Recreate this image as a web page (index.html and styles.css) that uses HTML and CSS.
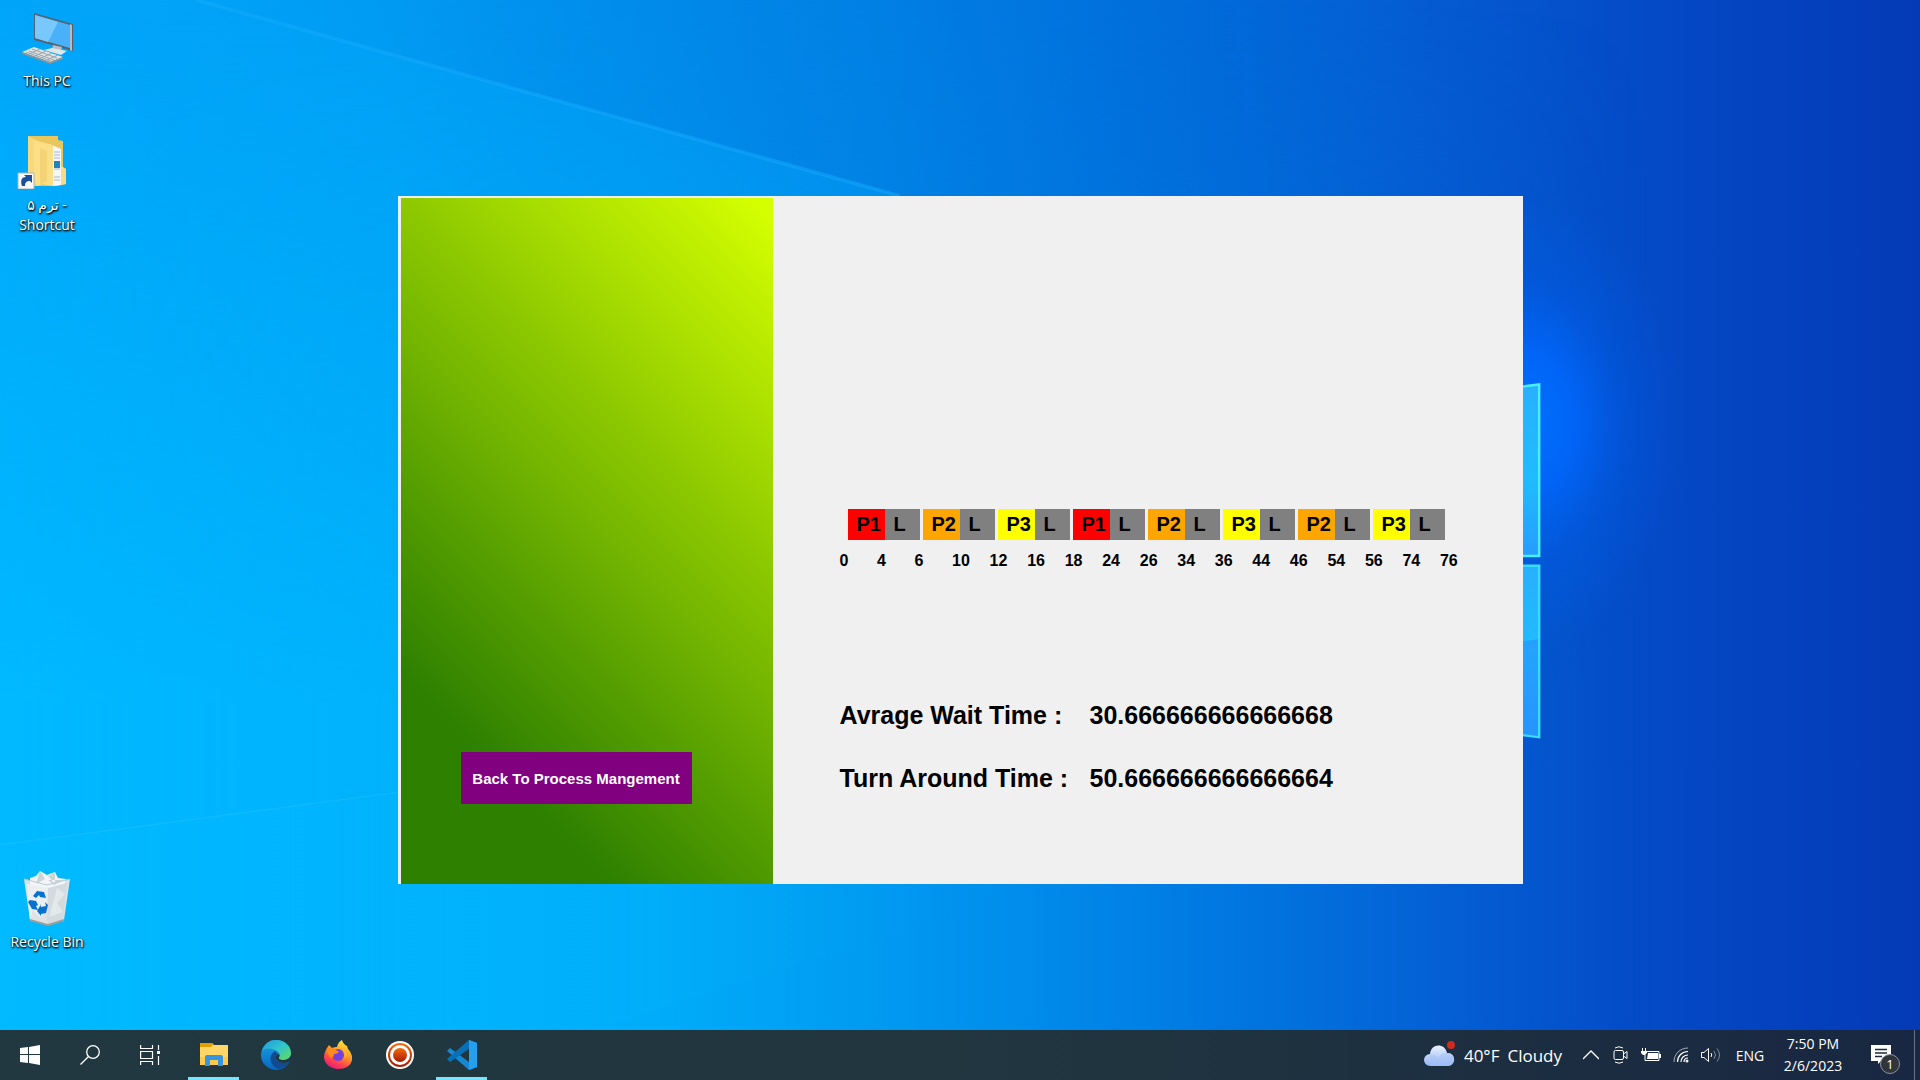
FILE: index.html
```html
<!DOCTYPE html>
<html lang="en">
<head>
<meta charset="utf-8">
<title>Process scheduling</title>
<link rel="stylesheet" href="styles.css">
</head>
<body>
<div class="screen">
  <svg class="wallpaper" viewBox="0 0 1568 882" preserveAspectRatio="none" aria-hidden="true">
    <defs>
      <linearGradient id="sky" x1="0" y1="0" x2="1" y2="0">
        <stop offset="0" stop-color="#00a6fa"/><stop offset=".2" stop-color="#00a0f6"/>
        <stop offset=".45" stop-color="#008cec"/><stop offset=".6" stop-color="#0074e0"/>
        <stop offset=".75" stop-color="#055ad2"/><stop offset=".88" stop-color="#0447c4"/>
        <stop offset="1" stop-color="#043ab6"/>
      </linearGradient>
      <linearGradient id="low" gradientUnits="userSpaceOnUse" x1="0" y1="0" x2="1350" y2="0">
        <stop offset="0" stop-color="#00b9ff"/><stop offset=".4" stop-color="#00b2fc" stop-opacity=".8"/><stop offset="1" stop-color="#0070dc" stop-opacity="0"/>
      </linearGradient>
      <linearGradient id="fade" x1="0" y1="0" x2="0" y2="1">
        <stop offset="0" stop-color="#000"/><stop offset=".65" stop-color="#fff"/>
      </linearGradient>
      <mask id="m"><rect width="1568" height="882" fill="url(#fade)"/></mask>
      <radialGradient id="glow" gradientUnits="userSpaceOnUse" cx="1245" cy="345" r="190" gradientTransform="translate(1245 345) scale(.7 1) translate(-1245 -345)">
        <stop offset="0" stop-color="#0070ff"/><stop offset=".3" stop-color="#0068ff" stop-opacity=".85"/><stop offset=".6" stop-color="#0062f4" stop-opacity=".3"/><stop offset="1" stop-color="#0060f0" stop-opacity="0"/>
      </radialGradient>
      <linearGradient id="top" gradientUnits="userSpaceOnUse" x1="160" y1="0" x2="1300" y2="0">
        <stop offset="0" stop-color="#007ae0" stop-opacity="0"/><stop offset=".45" stop-color="#0074dc" stop-opacity=".45"/><stop offset=".7" stop-color="#0060d0" stop-opacity=".3"/><stop offset="1" stop-color="#0058cc" stop-opacity="0"/>
      </linearGradient>
      <linearGradient id="floor" gradientUnits="userSpaceOnUse" x1="0" y1="0" x2="800" y2="0">
        <stop offset="0" stop-color="#00bcff" stop-opacity=".25"/><stop offset="1" stop-color="#00bcff" stop-opacity="0"/>
      </linearGradient>
      <linearGradient id="pane" x1="0" y1="0" x2="0" y2="1">
        <stop offset="0" stop-color="#28b0ff"/><stop offset=".55" stop-color="#20bcff"/><stop offset="1" stop-color="#269cff"/>
      </linearGradient>
    </defs>
    <rect width="1568" height="882" fill="url(#sky)"/>
    <rect width="1568" height="882" fill="url(#low)" mask="url(#m)"/>
    <path d="M160 0 735 160 1245 315 1350 0z" fill="url(#top)"/>
    <path d="M160 0 735 160" stroke="#18adff" stroke-width="3" opacity=".45"/>
    <path d="M0 690 325 647" stroke="#30c4ff" stroke-width="1" opacity=".4"/>
    <path d="M0 690 325 647V721H860L480 842H0z" fill="url(#floor)"/>
    <rect x="1080" y="150" width="350" height="390" fill="url(#glow)"/>
    <path d="M1200 321 1257 314V454H1200z" fill="url(#pane)" stroke="#48f0ff" stroke-width="2"/>
    <path d="M1200 462H1257V602L1200 595z" fill="url(#pane)" stroke="#38dcff" stroke-width="2"/>
    <path d="M1200 530 1256 522V601L1200 594z" fill="#2890ff" opacity=".6"/>
  </svg>

  <nav class="shortcuts" aria-label="Desktop">
    <a class="shortcut" href="#pc">
      <svg width="54" height="54" viewBox="0 0 54 54" aria-hidden="true">
        <path d="M14 2 53 13V40L14 29z" fill="#54636d"/><path d="M15 4 50 14V37L15 27z" fill="#49b1fa"/><path d="M15 4 38 11 28 31 15 27z" fill="#79c8fc"/><path d="M50 13l2 1v26l-2-1z" fill="#b3bdc4"/>
        <path d="M33 34l9 2-1 5-9-2z" fill="#b8bfc3"/><path d="M24 39l8-2 15 3-6 4z" fill="#e2e6e8"/>
        <path d="M2 41 14 36 43 46 30 51z" fill="#dfe3e5"/><path d="M2 41v2l28 10v-2zM30 51v2l13-5v-2z" fill="#89949b"/>
        <path d="M6 41l25 9M9 40l25 9M12 38l25 9M9 43l11-5M15 45l11-5M21 47l11-5M27 49l11-5" stroke="#9ba5aa" fill="none"/>
      </svg>
      <span>This PC</span>
    </a>
    <a class="shortcut" href="#term">
      <svg width="62" height="54" viewBox="3 0 62 54" aria-hidden="true">
        <path d="M15 1H45V5L50 6V32L53 34V49L44 51H15z" fill="#e9c65e"/><path d="M39 10 48 14V50L39 51z" fill="#f4f6f7"/><path d="M41 17h6M41 20h6M41 23h6M41 34h6M41 42h6M41 45h6" stroke="#a6b8c4"/><path d="M41 26h6v7h-6z" fill="#2383b9"/>
        <path d="M15 1 25 6V51H15z" fill="#f7d97c"/><path d="M21 5 40 10V51L29 49 25 51 21 44z" fill="#fbdf87"/><path d="M27 13 34 16V47L27 49z" fill="#efcb6b" opacity=".6"/><path d="M48 31l5 3v15l-5 1z" fill="#f7dc85"/>
        <path d="M5 38h16v16H5z" fill="#f8fafc" stroke="#aab4bc"/><path d="M9 51c-2-6 0-9 4-9l-2-2h8v8l-2-2c-4 0-5 2-5 5z" fill="#1b4f9c"/>
      </svg>
      <span>ترم ۵ - Shortcut</span>
    </a>
    <a class="shortcut bin" href="#bin">
      <svg width="50" height="56" viewBox="0 0 50 56" aria-hidden="true">
        <path d="M2 9 25 15 48 9 42 50 26 55 8 50z" fill="#d9e2e8"/><path d="M8 8 14 6 18 1 25 5 33 2 36 8 44 9 41 18H8z" fill="#f3f5f6"/>
        <path d="M18 1l5 8-9 5zM33 3l-7 3 7 8zM41 10l-9 5-6-5z" fill="#cdd4d8"/>
        <path d="M5 14 26 18 25 55 8 50z" fill="#eceff1"/><path d="M26 18 45 13 41 49 25 54z" fill="#d3dbdf"/><path d="M35 18l8 6-8 9 6 9-14 5 4-14z" fill="#e3e8ea"/><path d="M10 40l8 7 7-6v12L9 49z" fill="#dce2e5"/>
        <path d="M2 9 25 15 48 9" fill="none" stroke="#b9cbd6"/><path d="M8 50l18 5 16-5" fill="none" stroke="#a39e9c" stroke-width="2"/>
        <path d="M11 26l4-5 7 1 2 6-6-1-1-2-3 3zM8 30l6 1 2 4-2 1 2 4-6-1-4-7zM18 34l1 3 5-1-1-4 3 3-2 8-5 1v2l-4-5 3-5z" fill="#0873cf"/>
      </svg>
      <span>Recycle Bin</span>
    </a>
  </nav>

  <main class="window">
    <aside class="side">
      <button class="back" type="button">Back To Process Mangement</button>
    </aside>
    <section class="results">
      <ol class="bars">
        <li><span class="job red">P1</span><span class="load">L</span></li>
        <li><span class="job orange">P2</span><span class="load">L</span></li>
        <li><span class="job yellow">P3</span><span class="load">L</span></li>
        <li><span class="job red">P1</span><span class="load">L</span></li>
        <li><span class="job orange">P2</span><span class="load">L</span></li>
        <li><span class="job yellow">P3</span><span class="load">L</span></li>
        <li><span class="job orange">P2</span><span class="load">L</span></li>
        <li><span class="job yellow">P3</span><span class="load">L</span></li>
      </ol>
      <ol class="ticks">
        <li>0</li><li>4</li><li>6</li><li>10</li><li>12</li><li>16</li><li>18</li><li>24</li><li>26</li><li>34</li><li>36</li><li>44</li><li>46</li><li>54</li><li>56</li><li>74</li><li>76</li>
      </ol>
      <dl class="stats">
        <dt>Avrage Wait Time :</dt><dd>30.666666666666668</dd>
        <dt>Turn Around Time :</dt><dd>50.666666666666664</dd>
      </dl>
    </section>
  </main>

  <footer class="taskbar">
    <div class="system">
      <button type="button" aria-label="Start"><svg width="20" height="20" viewBox="0 0 20 20"><path d="M0 3 8 2V9H0zM9 2 20 0V9H9zM0 10H8V18L0 17zM9 10H20V20L9 18z" fill="#fff"/></svg></button>
      <button type="button" aria-label="Search"><svg width="20" height="20" viewBox="0 0 20 20" fill="none" stroke="#fff" stroke-width="1.3"><circle cx="13" cy="7" r="6.3"/><path d="M8.500 11.500 .5 19.500"/></svg></button>
      <button type="button" aria-label="Task view"><svg width="20" height="20" viewBox="0 0 20 20" fill="none" stroke="#fff" stroke-width="1.2"><path d="M.6 0V3.500H12.500V0M.6 20V16.500H12.500V20M.6 6.500H12.500V13.500H.6zM18.500 0V5M18.500 11V20"/><path d="M17 6h3v3h-3z" fill="#fff" stroke="none"/></svg></button>
    </div>
    <div class="apps">
      <button class="open" type="button" aria-label="File Explorer"><svg width="28" height="24" viewBox="0 0 28 24"><path d="M0 0H12L14 2H28V22H0z" fill="#ffd667"/><path d="M0 0H12L13 2 11 4H0z" fill="#e2a000"/><path d="M0 14H28V22H0z" fill="#fcca4d"/><path d="M5 23V14q0-2 2-2H21q2 0 2 2V23H18V17H10V23z" fill="#3795df"/></svg></button>
      <button type="button" aria-label="Edge"><svg width="30" height="30" viewBox="0 0 30 30"><defs><linearGradient id="e1" x1="0" y1="0" x2="1" y2="1"><stop offset="0" stop-color="#1c9de0"/><stop offset=".5" stop-color="#32c4cc"/><stop offset="1" stop-color="#65dc55"/></linearGradient><linearGradient id="e2" x1="0" y1="0" x2="0" y2="1"><stop offset="0" stop-color="#1ba3e6"/><stop offset="1" stop-color="#0768c0"/></linearGradient></defs><circle cx="15" cy="15" r="15" fill="url(#e2)"/><path d="M1 11C4 3 9 0 15 0c9 0 15 6 15 13 0 5-4 7-8 7-3 0-5-1-4-3 2-2 0-6-4-7C9 8 4 8 1 11z" fill="url(#e1)"/><path d="M14 11c-7 4-6 14 3 18 5-1 9-3 11-7-5 2-10 1-12-2-2-2-1-5 1-6z" fill="#124b91"/><path d="M17 14c2 1 2 2 1 3-1 2 1 3 4 3 4 0 7-2 8-5v6l-2 1c-5 2-10 1-12-2-2-2-1-5 1-6z" fill="#213840"/></svg></button>
      <button type="button" aria-label="Firefox"><svg width="28" height="30" viewBox="0 0 28 30"><defs><linearGradient id="f1" x1=".8" y1="0" x2=".3" y2="1"><stop offset="0" stop-color="#fff044"/><stop offset=".45" stop-color="#ff9a22"/><stop offset=".75" stop-color="#ff454c"/><stop offset="1" stop-color="#e8177c"/></linearGradient></defs><path d="M5 5 8 8q2-1 5-1 1-5 5-7 1 4 5 6l1 3q5 5 4 11c-1 6-7 9-14 9S0 24 0 17c0-4 2-8 5-12z" fill="url(#f1)"/><circle cx="14" cy="15" r="6" fill="#7640df"/><path d="M3 10q4-4 9 0l3 2q-2 2-5 2 0 3-3 4-4-4-4-8z" fill="#ff8a20"/><path d="M19 11q3 3 1 8 5-3 2-9z" fill="#ffb52d"/></svg></button>
      <button type="button" aria-label="Recorder"><svg width="28" height="28" viewBox="0 0 28 28"><defs><linearGradient id="r1" x1="0" y1="0" x2="0" y2="1"><stop offset="0" stop-color="#f46a09"/><stop offset="1" stop-color="#a71b05"/></linearGradient></defs><circle cx="14" cy="14" r="14" fill="#fff"/><circle cx="14" cy="14" r="12" fill="url(#r1)"/><circle cx="14" cy="14" r="10" fill="#fff"/><circle cx="14" cy="14" r="7" fill="url(#r1)"/></svg></button>
      <button class="open" type="button" aria-label="Visual Studio Code"><svg width="30" height="30" viewBox="0 0 30 30"><path d="M22 0 30 3V27L22 30 0 11 3 8 22 22z" fill="#1687d2"/><path d="M22 0V9L3 22 0 19z" fill="#0870b7"/><path d="M22 0 30 3V27L22 30z" fill="#25a0ee"/></svg></button>
    </div>
    <div class="tray">
      <button class="weather" type="button">
        <svg width="32" height="28" viewBox="0 0 32 28" aria-hidden="true"><defs><linearGradient id="c1" x1="0" y1="0" x2="0" y2="1"><stop offset="0" stop-color="#eaf1ff"/><stop offset="1" stop-color="#91b5f3"/></linearGradient></defs><path d="M6 25a6 6 0 0 1 0-12C7 2 21 2 23 12c9-1 10 13 0 13z" fill="url(#c1)"/><path d="M6 14c4-1 7 1 8 4 1-4 5-6 9-6 9-1 10 13 0 13H6z" fill="#a4c1f8" opacity=".5"/><circle cx="27" cy="4" r="4" fill="#cc2b20"/></svg>
        <span>40°F</span><span>Cloudy</span>
      </button>
      <button class="tool" type="button" aria-label="Hidden icons"><svg width="16" height="10" viewBox="0 0 16 10" fill="none" stroke="#fff" stroke-width="1.3"><path d="M0 9 8 1 16 9"/></svg></button>
      <button class="tool" type="button" aria-label="Meet now"><svg width="16" height="18" viewBox="0 0 16 18" fill="none" stroke="#fff"><rect x="1" y="4.500" width="9.500" height="9" rx="1.500"/><path d="M10.500 8 14 5.500V12.500L10.500 10M2 2Q6-.5 10 2M2 16Q6 18.500 10 16"/></svg></button>
      <button class="tool" type="button" aria-label="Battery"><svg width="20" height="14" viewBox="0 0 20 14"><path d="M5 3.500H18V12.500H4V7" fill="none" stroke="#fff"/><path d="M7 5h10v6H6zM18 6h2v4h-2zM1 0h1v3H1zM4 0h1v3H4zM0 3h6v2L4 7H2L0 5z" fill="#fff"/></svg></button>
      <button class="tool" type="button" aria-label="Network"><svg width="16" height="16" viewBox="0 0 16 16" fill="none" stroke="#fff"><path d="M1 15C1 7 7 1 15 1" opacity=".6"/><path d="M4.500 15C4.500 9 9 4.500 15 4.500M8 15C8 11 11 8 15 8M11 15q0-4 4-4" stroke-width="1.200"/><circle cx="14" cy="14" r="1.500" fill="#fff" stroke="none"/></svg></button>
      <button class="tool" type="button" aria-label="Volume"><svg width="20" height="16" viewBox="0 0 20 16" fill="none" stroke="#fff"><path d="M.5 5.500H3L7.500 1.500V14.500L3 10.500H.5z"/><path d="M10 6q1.500 2 0 4"/><path d="M13 4q3 4 0 8M16 1.500q5 6.500 0 13" opacity=".45"/></svg></button>
      <button class="lang" type="button">ENG</button>
      <button class="clock" type="button"><span>7:50 PM</span><span>2/6/2023</span></button>
      <button class="notes" type="button" aria-label="Notifications">
        <svg width="20" height="20" viewBox="0 0 20 20" aria-hidden="true"><path d="M0 0H20V16H10L7 19V16H0z" fill="#fff"/><path d="M4 4.500H16M4 8H16M4 11.500H11" stroke="#1b2b42" stroke-width="1.300"/></svg>
        <span class="badge">1</span>
      </button>
      <span class="peek"></span>
    </div>
  </footer>
</div>
</body>
</html>
```
FILE: styles.css
```css
* { box-sizing: border-box; }
body { margin: 0; font-family: "Open Sans", "Noto Sans", "DejaVu Sans", sans-serif; }
button { border: 0; padding: 0; background: none; color: inherit; font: inherit; }
ol, dl, dd { margin: 0; padding: 0; list-style: none; }

.screen {
  position: relative;
  display: grid;
  grid-template-columns: 94px 1fr 94px;
  grid-template-rows: 1fr 50px;
  min-height: 100vh;
  background: #0070de;
}
.wallpaper { position: absolute; width: 100%; height: 100%; }

/* Desktop shortcuts */
.shortcuts {
  position: relative;
  grid-area: 1 / 1;
  display: flex;
  flex-direction: column;
  gap: 44px;
  padding: 11px 0 78px;
}
.shortcut {
  display: flex;
  flex-direction: column;
  align-items: center;
  gap: 6px;
  padding: 0 8px;
  color: #fff;
  font-size: 14px;
  line-height: 20px;
  text-align: center;
  text-decoration: none;
  text-shadow: 1px 1px 2px #000, 0 1px 2px #000;
}
.bin { margin-top: auto; padding: 0; }

/* Application window */
.window {
  position: relative;
  grid-area: 1 / 1 / 3 / 4;
  place-self: center;
  display: flex;
  width: 1125px;
  max-width: 100%;
  min-height: 688px;
  padding: 2px 0 0 3px;
  background: #f0f0f0;
  color: #000;
  font-family: "Liberation Sans", Arial, sans-serif;
  font-weight: bold;
}
.side {
  display: flex;
  flex: 0 0 372px;
  align-items: flex-end;
  padding: 0 60px 80px;
  background: linear-gradient(45deg, #2e8000 20%, #d4ff00 98%);
}
.back { width: 231px; height: 52px; background: #800080; color: #fff; font-size: 15px; white-space: nowrap; }
.results { flex: 1; padding: 311px 0 0 67px; }
.bars { display: flex; gap: 3px; padding-left: 8px; }
.bars li { display: flex; flex: 0 0 72px; height: 31px; font-size: 20px; line-height: 31px; }
.bars span { padding-left: 9px; }
.job { width: 37px; }
.load { flex: 1; background: #808080; }
.red { background: #f00; }
.orange { background: #ffa500; }
.yellow { background: #ff0; }
.ticks {
  display: grid;
  grid-template-columns: repeat(17, 1fr);
  width: 638px;
  margin-right: -20px;
  padding-top: 11px;
  font-size: 16px;
  line-height: 20px;
}
.stats {
  display: grid;
  grid-template-columns: 250px 1fr;
  grid-auto-rows: 63px;
  align-items: center;
  padding-top: 113px;
  font-size: 25px;
}

/* Taskbar */
.taskbar {
  position: relative;
  grid-area: 2 / 1 / 3 / 4;
  display: flex;
  background: linear-gradient(90deg, #213840, #21363f 50%, #1d3040 72%, #192742);
  color: #fff;
  font-size: 15px;
}
.taskbar button { display: flex; align-items: center; justify-content: center; }
.system, .apps, .tray { display: flex; }
.system button { width: 60px; }
.apps { gap: 11px; padding-left: 8px; }
.apps button { width: 51px; border-bottom: 3px solid transparent; border-top: 3px solid transparent; }
.apps .open { border-bottom-color: #76e5ff; }
.tray { margin-left: auto; }
.tray .weather { gap: 8px; margin-right: 14px; font-size: 17px; }
.tray .tool { width: 30px; }
.tray .lang { width: 48px; font-size: 14px; }
.tray .clock { flex-direction: column; width: 78px; font-size: 14px; line-height: 22px; }
.tray .notes { position: relative; width: 62px; padding-right: 4px; }
.badge {
  position: absolute;
  top: 24px;
  left: 28px;
  width: 20px;
  height: 20px;
  border: 1px solid #8c939b;
  border-radius: 50%;
  background: #30343b;
  font-size: 13px;
  line-height: 18px;
  text-align: center;
}
.peek { width: 6px; border-left: 1px solid #667085; }
```
